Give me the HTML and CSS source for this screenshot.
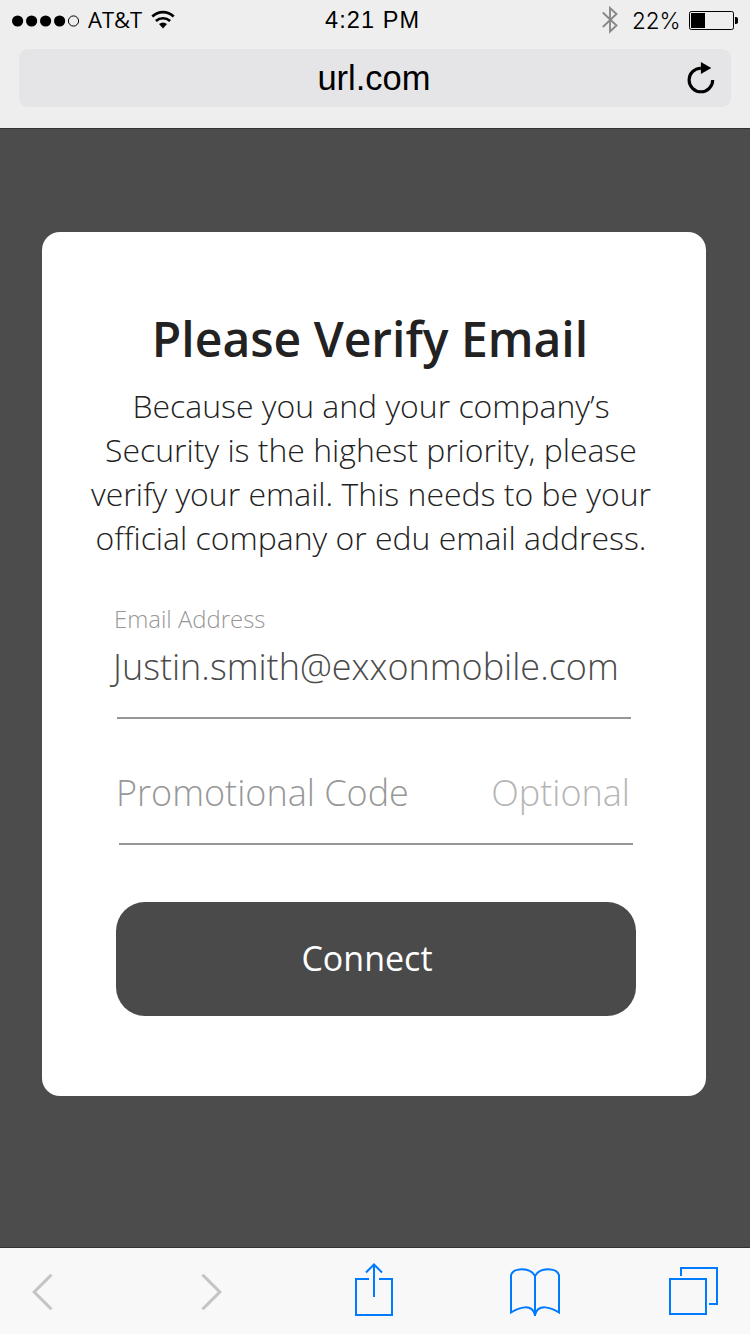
FILE: index.html
```html
<!DOCTYPE html>
<html lang="en">
<head>
<meta charset="utf-8">
<title>Please Verify Email</title>
<link rel="stylesheet" href="styles.css">
</head>
<body>
<header class="browser-top">
  <div class="status">
    <div class="status-left">
      <svg class="signal" width="70" height="12" viewBox="0 0 70 12"><circle cx="5.600" cy="6" r="5.600"/><circle cx="19.600" cy="6" r="5.600"/><circle cx="33.600" cy="6" r="5.600"/><circle cx="47.600" cy="6" r="5.600"/><circle cx="61.500" cy="6" r="5.100" fill="none" stroke="#000" stroke-width="1"/></svg>
      <span class="carrier">AT&amp;T</span>
      <svg class="wifi" width="24" height="19" viewBox="0 0 24 19"><path d="M1.300 6.500C7.500.7 16.500.7 22.700 6.500M4.900 11C9 7.300 15 7.300 19.100 11" fill="none" stroke="#000" stroke-width="2.700"/><path d="M8 14Q12 10.800 16 14L12 18.400Z"/></svg>
    </div>
    <span class="clock">4:21 PM</span>
    <div class="status-right">
      <svg class="bluetooth" width="18" height="28" viewBox="0 0 18 28"><path d="M1.800 6.500L15.500 19.500L9 25.500V2L15.500 8L1.800 21" fill="none" stroke="#888" stroke-width="1.900"/></svg>
      <span class="percent">22%</span>
      <svg class="battery" width="49" height="19" viewBox="0 0 49 19"><rect x=".5" y=".5" width="44" height="18" rx="1.800" fill="none" stroke="#000"/><rect x="2" y="2" width="14" height="15"/><path d="M46 6h1q2 0 2 2v3q0 2-2 2h-1z"/></svg>
    </div>
  </div>
  <div class="address">
    <span class="url">url.com</span>
    <svg class="reload" width="28" height="32" viewBox="0 0 28 32"><path d="M25.700 18A11.800 11.800 0 1 1 13.900 6.200" fill="none" stroke="#000" stroke-width="3.100"/><path d="M13.900 0L24.300 6L13.900 12Z"/></svg>
  </div>
</header>
<main class="page">
  <form class="card">
    <h1 class="title">Please Verify Email</h1>
    <p class="intro">Because you and your company’s<br>Security is the highest priority, please<br>verify your email. This needs to be your<br>official company or edu email address.</p>
    <div class="field email">
      <label class="label">Email Address</label>
      <div class="value">Justin.smith@exxonmobile.com</div>
    </div>
    <div class="field promo">
      <span class="placeholder">Promotional Code</span>
      <span class="optional">Optional</span>
    </div>
    <button class="connect" type="button">Connect</button>
  </form>
</main>
<nav class="toolbar">
  <svg class="back" width="22" height="36" viewBox="0 0 22 36"><path d="M19.500.7L2.200 18L19.500 35.300" fill="none" stroke="#c4c4c4" stroke-width="3"/></svg>
  <svg class="forward" width="22" height="36" viewBox="0 0 22 36"><path d="M2.500.7L19.800 18L2.500 35.300" fill="none" stroke="#c4c4c4" stroke-width="3"/></svg>
  <svg class="blue share" width="38" height="54" viewBox="0 0 38 54"><path d="M14 17H1V53H37V17H24M19 35V2M11 10.500L19 2.500L27 10.500"/></svg>
  <svg class="blue book" width="50" height="50" viewBox="0 0 50 50"><path d="M25 49V9C20-.5 3 .5 1 8V45.500C9 40.500 22 36 25 48C28 36 41 40.500 49 45.500V8C47 .5 30-.5 25 9"/></svg>
  <svg class="blue tabs" width="49" height="48" viewBox="0 0 49 48"><path d="M1 12H37V47H1ZM12 9V1H48V37H40"/></svg>
</nav>
</body>
</html>
```
FILE: styles.css
```css
* { box-sizing: border-box; }
body {
  margin: 0;
  width: 750px;
  height: 1334px;
  display: flex;
  flex-direction: column;
  overflow: hidden;
  background: #4c4c4c;
  font-family: "Open Sans", sans-serif;
}
svg { display: block; flex: none; }

.browser-top {
  height: 129px;
  flex: none;
  padding: 0 19px;
  background: #eee;
  border-bottom: 1px solid #333;
}
.status {
  height: 49px;
  margin: 0 -19px;
  padding: 0 12px;
  display: grid;
  grid-template-columns: 313px 1fr 300px;
}
.status-left, .status-right { display: flex; align-items: flex-start; }
.status-right { justify-content: flex-end; }
.signal { margin-top: 14.500px; }
.carrier { margin: 4px 0 0 6px; font-size: 22px; line-height: 30px; width: 56px; white-space: nowrap; }
.wifi { margin: 10px 0 0 6.700px; }
.clock {
  margin-top: 5px;
  font: 23.500px/30px "Liberation Sans", sans-serif;
  letter-spacing: 1.100px;
  white-space: nowrap;
}
.bluetooth { margin-top: 6px; }
.percent { margin: 6px 0 0 13px; width: 48px; font: 300 22.500px/30px Inter, sans-serif; white-space: nowrap; }
.battery { margin: 11px 0 0 9px; }
.address {
  height: 58px;
  padding: 0 16px;
  border-radius: 9px;
  background: #e5e5e7;
  display: grid;
  grid-template-columns: 28px 1fr 28px;
  align-items: center;
}
.url {
  grid-column: 2;
  padding: 0 2px 1px 0;
  text-align: center;
  font: 34.500px/40px "Liberation Sans", sans-serif;
}

.page { flex: 1; padding: 103px 44px 0 42px; }
.card {
  height: 864px;
  padding: 75px 0 0;
  background: #fff;
  border-radius: 18px;
}
.title {
  margin: 0 8px 13px 0;
  font-size: 48px;
  line-height: 64px;
  font-weight: 600;
  text-align: center;
  color: #222;
}
.intro {
  margin: 0 6px 0 0;
  font-size: 31.960px;
  line-height: 44px;
  font-weight: 300;
  text-align: center;
  color: #222;
  white-space: nowrap;
}
.field { width: 514px; border-bottom: 2px solid #979797; font-weight: 300; white-space: nowrap; }
.email { margin: 43px 0 0 75px; height: 116px; }
.label { display: block; margin-left: -3px; font-size: 23.900px; line-height: 32px; color: #979797; }
.value { margin: 8px 0 0 -4px; font-size: 36px; line-height: 48px; color: #4a4a4a; }
.promo {
  margin: 50px 0 0 77px;
  height: 76px;
  display: flex;
  justify-content: space-between;
  padding-right: 3px;
  font-size: 36px;
  line-height: 48px;
  color: #979797;
}
.placeholder { margin-left: -3px; }
.optional { color: #b5b5b5; }
.connect {
  display: block;
  width: 520px;
  height: 114px;
  margin: 57px 0 0 74px;
  padding: 0 18px 2px 0;
  border: 0;
  border-radius: 29px;
  background: #4a4a4a;
  color: #fff;
  font: 34px/46px "Open Sans", sans-serif;
}

.toolbar {
  height: 87px;
  flex: none;
  padding: 14px 32px 0;
  display: flex;
  background: #f8f8f8;
  border-top: 1px solid #333;
}
.back { margin-top: 12.300px; }
.forward { margin: 12.300px 0 0 146px; }
.blue { fill: none; stroke: #007aff; stroke-width: 2; }
.share { margin-left: 133px; }
.book { margin: 5px 0 0 117px; }
.tabs { margin: 5px 0 0 109px; }
```
